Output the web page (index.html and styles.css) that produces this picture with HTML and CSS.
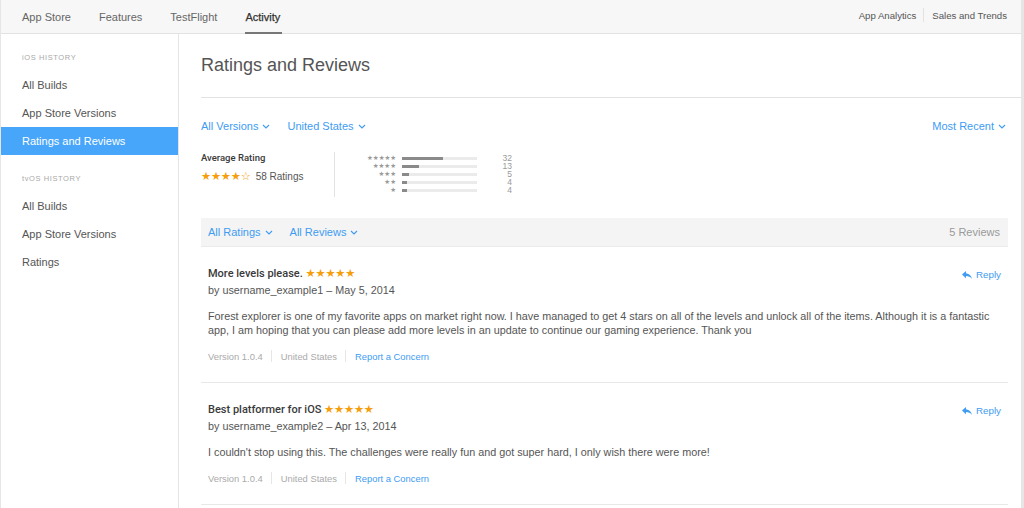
FILE: index.html
```html
<!DOCTYPE html>
<html lang="en">
<head>
<meta charset="utf-8">
<title>Ratings and Reviews</title>
<link rel="stylesheet" href="styles.css">
</head>
<body>
<div class="app">
  <header class="topnav">
    <nav class="tabs">
      <a class="tab">App Store</a>
      <a class="tab">Features</a>
      <a class="tab">TestFlight</a>
      <a class="tab active">Activity</a>
    </nav>
    <nav class="tools">
      <a class="tool">App Analytics</a>
      <span class="tool-sep"></span>
      <a class="tool">Sales and Trends</a>
    </nav>
  </header>
  <div class="body">
    <aside class="sidebar">
      <div class="side-label">iOS HISTORY</div>
      <a class="side-item">All Builds</a>
      <a class="side-item">App Store Versions</a>
      <a class="side-item selected">Ratings and Reviews</a>
      <div class="side-label second">tvOS HISTORY</div>
      <a class="side-item">All Builds</a>
      <a class="side-item">App Store Versions</a>
      <a class="side-item">Ratings</a>
    </aside>
    <main class="main">
      <div class="page-head"><h1>Ratings and Reviews</h1></div>
      <div class="filters">
        <a class="drop">All Versions<svg class="chev" viewBox="0 0 8 5" width="8" height="5"><path d="M1 1l3 3 3-3" fill="none" stroke="currentColor" stroke-width="1.1"/></svg></a>
        <a class="drop">United States<svg class="chev" viewBox="0 0 8 5" width="8" height="5"><path d="M1 1l3 3 3-3" fill="none" stroke="currentColor" stroke-width="1.1"/></svg></a>
        <a class="drop push">Most Recent<svg class="chev" viewBox="0 0 8 5" width="8" height="5"><path d="M1 1l3 3 3-3" fill="none" stroke="currentColor" stroke-width="1.1"/></svg></a>
      </div>
      <section class="summary">
        <div class="avg">
          <div class="avg-label">Average Rating</div>
          <div class="avg-line"><span class="stars big">★★★★☆</span><span class="avg-count">58 Ratings</span></div>
        </div>
        <div class="hist">
          <div class="hrow"><span class="hstars">★★★★★</span><span class="track"><span class="fill" style="width:41px"></span></span><span class="hnum">32</span></div>
          <div class="hrow"><span class="hstars">★★★★</span><span class="track"><span class="fill" style="width:17px"></span></span><span class="hnum">13</span></div>
          <div class="hrow"><span class="hstars">★★★</span><span class="track"><span class="fill" style="width:7px"></span></span><span class="hnum">5</span></div>
          <div class="hrow"><span class="hstars">★★</span><span class="track"><span class="fill" style="width:5px"></span></span><span class="hnum">4</span></div>
          <div class="hrow"><span class="hstars">★</span><span class="track"><span class="fill" style="width:5px"></span></span><span class="hnum">4</span></div>
        </div>
      </section>
      <div class="bar">
        <a class="drop">All Ratings<svg class="chev" viewBox="0 0 8 5" width="8" height="5"><path d="M1 1l3 3 3-3" fill="none" stroke="currentColor" stroke-width="1.1"/></svg></a>
        <a class="drop">All Reviews<svg class="chev" viewBox="0 0 8 5" width="8" height="5"><path d="M1 1l3 3 3-3" fill="none" stroke="currentColor" stroke-width="1.1"/></svg></a>
        <span class="count push">5 Reviews</span>
      </div>
      <article class="review">
        <div class="rv-top">
          <div class="rv-title">More levels please. <span class="stars">★★★★★</span></div>
          <a class="reply"><svg viewBox="0 0 10 8" width="10" height="8"><path d="M4 0L0 3.6 4 7.2V5C6.6 5 8.4 5.8 10 8 9.4 5 7.6 2.6 4 2.2z" fill="currentColor"/></svg>Reply</a>
        </div>
        <div class="rv-by">by username_example1 – May 5, 2014</div>
        <p class="rv-text">Forest explorer is one of my favorite apps on market right now. I have managed to get 4 stars on all of the levels and unlock all of the items. Although it is a fantastic app, I am hoping that you can please add more levels in an update to continue our gaming experience. Thank you</p>
        <div class="rv-meta"><span>Version 1.0.4</span><span class="msep"></span><span>United States</span><span class="msep"></span><a class="link">Report a Concern</a></div>
      </article>
      <article class="review">
        <div class="rv-top">
          <div class="rv-title">Best platformer for iOS <span class="stars">★★★★★</span></div>
          <a class="reply"><svg viewBox="0 0 10 8" width="10" height="8"><path d="M4 0L0 3.6 4 7.2V5C6.6 5 8.4 5.8 10 8 9.4 5 7.6 2.6 4 2.2z" fill="currentColor"/></svg>Reply</a>
        </div>
        <div class="rv-by">by username_example2 – Apr 13, 2014</div>
        <p class="rv-text">I couldn't stop using this. The challenges were really fun and got super hard, I only wish there were more!</p>
        <div class="rv-meta"><span>Version 1.0.4</span><span class="msep"></span><span>United States</span><span class="msep"></span><a class="link">Report a Concern</a></div>
      </article>
    </main>
  </div>
</div>
</body>
</html>
```

FILE: styles.css
```css
* { box-sizing: border-box; }
html, body { margin: 0; padding: 0; }
body {
  background: #e6e6e6;
  font-family: "Liberation Sans", Arial, sans-serif;
  font-size: 11px;
  color: #555;
  height: 508px;
  overflow: hidden;
}
a { cursor: pointer; }
.app {
  margin-left: 1px;
  width: 1020px;
  height: 508px;
  background: #fff;
  display: flex;
  flex-direction: column;
}
.topnav {
  height: 34px;
  flex: none;
  background: #f7f7f7;
  border-bottom: 1px solid #e2e2e2;
  display: flex;
  align-items: stretch;
  justify-content: space-between;
  padding: 0 14px 0 21px;
}
.tabs { display: flex; gap: 28px; }
.tab {
  display: flex;
  align-items: center;
  color: #666;
  font-size: 11px;
  padding-top: 1px;
  border-bottom: 2px solid transparent;
  margin-bottom: -1px;
}
.tab.active {
  color: #333;
  border-bottom-color: #777;
  -webkit-text-stroke: 0.25px #333;
  padding: 1px 2px 0 0;
}
.tools { display: flex; align-items: center; gap: 7px; padding-bottom: 3px; }
.tools .tool-sep { margin-right: 1px; }
.tool { color: #555; font-size: 9.6px; }
.tool-sep { width: 1px; height: 14px; background: #e2e2e2; }
.body { flex: 1; display: flex; min-height: 0; }
.sidebar {
  width: 178px;
  flex: none;
  border-right: 1px solid #e4e4e4;
  padding-top: 16px;
  display: flex;
  flex-direction: column;
}
.side-label {
  height: 16px;
  line-height: 16px;
  padding-left: 21px;
  font-size: 7.5px;
  letter-spacing: 0.6px;
  color: #a9a9a9;
  margin-bottom: 5px;
}
.side-label.second { margin-top: 16px; }
.side-item {
  height: 28px;
  line-height: 28px;
  padding-left: 21px;
  color: #555;
  font-size: 11px;
}
.side-item.selected { background: #47a6f9; color: #fff; }
.main {
  flex: 1;
  min-width: 0;
  padding: 0 13px 0 22px;
}
.page-head {
  height: 64px;
  border-bottom: 1px solid #e3e3e3;
  margin-right: -13px;
  padding-top: 20px;
}
h1 {
  margin: 0;
  font-size: 18px;
  line-height: 22px;
  font-weight: normal;
  color: #555;
}
.filters {
  display: flex;
  align-items: center;
  gap: 17px;
  margin-top: 21px;
  height: 14px;
  padding-right: 2px;
}
.drop {
  color: #3e9cf2;
  font-size: 11px;
  line-height: 14px;
  display: inline-flex;
  align-items: center;
}
.chev { margin-left: 4px; margin-top: 1px; }
.push { margin-left: auto; }
.summary {
  display: flex;
  margin-top: 19px;
  height: 45px;
}
.avg {
  width: 134px;
  border-right: 1px solid #e2e2e2;
}
.avg-label {
  font-family: Roboto, "Liberation Sans", sans-serif;
  font-weight: 500;
  font-size: 9.5px;
  line-height: 12px;
  color: #3a3a3a;
}
.avg-line {
  display: flex;
  align-items: center;
  margin-top: 6px;
  height: 12px;
}
.stars {
  font-family: "DejaVu Sans", sans-serif;
  color: #f59d0a;
  font-size: 11.3px;
  letter-spacing: -0.2px;
}
.avg-count { margin-left: 5px; font-size: 10px; color: #555; }
.hist { padding-top: 2px; margin-left: 32px; }
.hrow { display: flex; align-items: center; height: 8px; }
.hstars {
  width: 29px;
  text-align: right;
  font-family: "DejaVu Sans", sans-serif;
  font-size: 6.5px;
  line-height: 8px;
  color: #9a9a9a;
}
.track {
  margin-left: 6px;
  width: 75px;
  height: 3px;
  background: #ebebeb;
  display: flex;
}
.fill { height: 3px; background: #8a8a8a; }
.hnum {
  width: 35px;
  text-align: right;
  font-size: 8.5px;
  line-height: 8px;
  color: #999;
}
.bar {
  margin-top: 21px;
  height: 29px;
  background: #f4f4f4;
  border-bottom: 1px solid #ebebeb;
  display: flex;
  align-items: center;
  gap: 17px;
  padding: 0 8px 0 7px;
}
.count { color: #9a9a9a; font-size: 11px; }
.review {
  padding: 18px 7px 19px 7px;
  border-bottom: 1px solid #e8e8e8;
}
.rv-top { display: flex; justify-content: space-between; align-items: center; height: 16px; }
.rv-title {
  font-family: Roboto, "Liberation Sans", sans-serif;
  font-weight: 500;
  font-size: 11px;
  color: #3a3a3a;
}
.reply {
  color: #3e9cf2;
  font-size: 9.8px;
  display: inline-flex;
  align-items: center;
  margin-top: 3px;
}
.reply svg { margin-right: 4px; }
.rv-by { margin-top: 1px; line-height: 16px; color: #555; font-size: 10.8px; }
.rv-text {
  margin: 11px 0 0;
  line-height: 14px;
  font-size: 10.8px;
  color: #555;
}
.rv-meta {
  margin-top: 12px;
  height: 14px;
  display: flex;
  align-items: center;
  font-size: 9.4px;
  color: #aaa;
}
.msep { width: 1px; height: 12px; background: #e6e6e6; margin: 0 9px 0 8px; }
.link { color: #3e9cf2; }
```
